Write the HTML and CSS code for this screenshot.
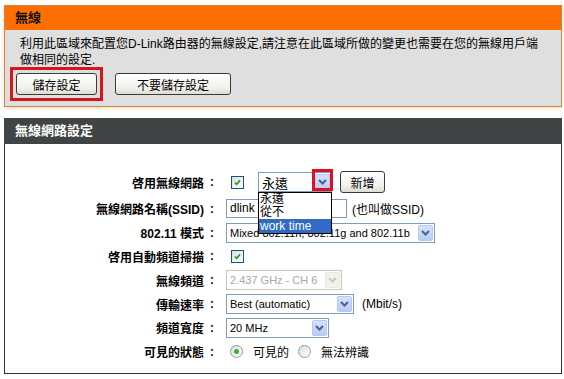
FILE: index.html
```html
<!DOCTYPE html>
<html lang="zh-Hant">
<head>
    <meta charset="UTF-8">
    <title>無線</title>
    <link rel="stylesheet" href="styles.css">
</head>
<body>
    <div class="box box-info">
        <h2 class="box-title">無線</h2>
        <div class="box-body">
            <p class="intro">利用此區域來配置您D-Link路由器的無線設定,請注意在此區域所做的變更也需要在您的無線用戶端<br>做相同的設定.</p>
            <div class="actions">
                <span class="mark"><button class="btn btn-save">儲存設定</button></span>
                <button class="btn btn-cancel">不要儲存設定</button>
            </div>
        </div>
    </div>

    <div class="box box-form">
        <h2 class="box-title">無線網路設定</h2>
        <div class="form">
            <div class="label">啓用無線網路<span class="colon">:</span></div>
            <div class="field">
                <span class="check"><svg viewBox="0 0 13 13"><path d="M3.5 6.5l2 2l4-4.5" /></svg></span>
                <div class="select sel-sched">
                    <span class="val">永遠</span>
                    <span class="arrow"><svg viewBox="0 0 9 6"><path d="M1 1l3.5 3.5l3.5-3.5" /></svg></span>
                    <span class="arrow-mark"></span>
                    <ul class="dropdown">
                        <li>永遠</li>
                        <li>從不</li>
                        <li class="active">work time</li>
                    </ul>
                </div>
                <button class="btn btn-add">新增</button>
            </div>

            <div class="label">無線網路名稱(SSID)<span class="colon">:</span></div>
            <div class="field">
                <span class="input">dlink</span>
                <span class="note">(也叫做SSID)</span>
            </div>

            <div class="label">802.11 模式<span class="colon">:</span></div>
            <div class="field">
                <div class="select sel-mode">
                    <span class="val">Mixed 802.11n, 802.11g and 802.11b</span>
                    <span class="arrow"><svg viewBox="0 0 9 6"><path d="M1 1l3.5 3.5l3.5-3.5" /></svg></span>
                </div>
            </div>

            <div class="label">啓用自動頻道掃描<span class="colon">:</span></div>
            <div class="field">
                <span class="check"><svg viewBox="0 0 13 13"><path d="M3.5 6.5l2 2l4-4.5" /></svg></span>
            </div>

            <div class="label">無線頻道<span class="colon">:</span></div>
            <div class="field">
                <div class="select sel-chan disabled">
                    <span class="val">2.437 GHz - CH 6</span>
                    <span class="arrow"><svg viewBox="0 0 9 6"><path d="M1 1l3.5 3.5l3.5-3.5" /></svg></span>
                </div>
            </div>

            <div class="label">傳輸速率<span class="colon">:</span></div>
            <div class="field">
                <div class="select sel-rate">
                    <span class="val">Best (automatic)</span>
                    <span class="arrow"><svg viewBox="0 0 9 6"><path d="M1 1l3.5 3.5l3.5-3.5" /></svg></span>
                </div>
                <span class="note">(Mbit/s)</span>
            </div>

            <div class="label">頻道寬度<span class="colon">:</span></div>
            <div class="field">
                <div class="select sel-width">
                    <span class="val">20 MHz</span>
                    <span class="arrow"><svg viewBox="0 0 9 6"><path d="M1 1l3.5 3.5l3.5-3.5" /></svg></span>
                </div>
            </div>

            <div class="label">可見的狀態<span class="colon">:</span></div>
            <div class="field">
                <span class="radio on"></span><span class="radio-text">可見的</span>
                <span class="radio"></span><span class="radio-text">無法辨識</span>
            </div>
        </div>
    </div>
</body>
</html>
```

FILE: styles.css
```css
body {
    margin: 0;
    padding: 5px 2px 0 4px;
    background: white;
    font-family: "Liberation Sans", "Noto Sans CJK TC", sans-serif;
    font-size: 12px;
    color: #000;
}
.box {
    width: 558px;
    box-sizing: border-box;
}
.box-title {
    margin: 0;
    font-size: 13px;
    font-weight: bold;
    height: 25px;
    line-height: 25px;
    padding-left: 10px;
}
.box-info {
    border: 1px solid #c8894a;
    box-shadow: 0 1px 4px rgba(240, 170, 80, 0.45);
}
.box-info .box-title {
    background: #ff6f00;
    color: #111;
    height: 24px;
    line-height: 24px;
}
.box-body {
    background: #dfdfdf;
    padding: 6px 5px 5px 5px;
}
.intro {
    margin: 0 0 0 10px;
    line-height: 16px;
    font-size: 12px;
}
.actions {
    display: flex;
    align-items: center;
    margin-top: -1px;
}
.mark {
    display: inline-block;
    border: 3px solid #d8141c;
    padding: 3px;
    margin-right: 12px;
}
.btn {
    font-family: "Liberation Sans", "Noto Sans CJK TC", sans-serif;
    font-size: 12px;
    height: 22px;
    padding: 0;
    border: 1px solid #3b3b3b;
    border-radius: 3px;
    background: linear-gradient(#ffffff, #f1f1ec 70%, #dcdcd2);
    color: #000;
}
.btn-save {
    display: block;
    width: 81px;
}
.btn-cancel {
    width: 116px;
}
.box-form {
    margin-top: 11px;
    border: 1px solid #333;
    border-top: 0;
}
.box-form .box-title {
    background: #404444;
    color: white;
    height: 26px;
    line-height: 26px;
    margin: 0 -1px;
    padding-left: 11px;
}
.form {
    display: grid;
    grid-template-columns: 209px 1fr;
    grid-template-rows: 30px repeat(7, 23.8px);
    column-gap: 12px;
    padding: 23px 0 9px;
}
.label {
    font-weight: bold;
    font-size: 12px;
    display: flex;
    align-items: center;
    justify-content: flex-end;
    white-space: nowrap;
}
.colon {
    margin-left: 6px;
}
.field {
    display: flex;
    align-items: center;
}
.check {
    width: 11px;
    height: 11px;
    border: 1px solid #1c5180;
    background: linear-gradient(135deg, #dcdcd7, #fff);
    margin-left: 5px;
    display: inline-block;
}
.check svg {
    display: block;
    width: 11px;
    height: 11px;
}
.check path {
    fill: none;
    stroke: #21a121;
    stroke-width: 2;
}
.select {
    position: relative;
    border: 1px solid #7f9db9;
    background: white;
    display: flex;
    align-items: center;
    box-sizing: border-box;
    height: 20px;
    font-size: 11px;
}
.select .val {
    flex: 1;
    padding-left: 3px;
    white-space: nowrap;
    overflow: hidden;
}
.arrow {
    width: 15px;
    height: 16px;
    margin-right: 1px;
    border: 1px solid #b6c9f3;
    border-radius: 2px;
    background: linear-gradient(#d6e2fd, #b7cbf7);
    box-sizing: border-box;
    display: flex;
    align-items: center;
    justify-content: center;
}
.arrow svg {
    width: 9px;
    height: 6px;
}
.arrow path {
    fill: none;
    stroke: #4d6185;
    stroke-width: 2;
}
.sel-sched {
    width: 74px;
    margin-left: 14px;
    font-size: 13px;
}
.arrow-mark {
    position: absolute;
    right: -2px;
    top: -4px;
    width: 21px;
    height: 22px;
    border: 3px solid #e01020;
    box-sizing: border-box;
}
.dropdown {
    position: absolute;
    top: 19px;
    left: -1px;
    width: 72px;
    margin: 0;
    padding: 0;
    list-style: none;
    background: white;
    border: 1px solid #000;
    font-size: 12px;
    z-index: 2;
}
.dropdown li {
    height: 13px;
    line-height: 13px;
    padding-left: 1px;
}
.dropdown li.active {
    background: #316ac5;
    color: white;
    height: 14px;
    line-height: 14px;
}
.btn-add {
    width: 45px;
    margin-left: 8px;
}
.input {
    width: 121px;
    height: 19px;
    box-sizing: border-box;
    border: 1px solid #7f9db9;
    padding-left: 3px;
    line-height: 17px;
    font-size: 12px;
}
.note {
    margin-left: 5px;
    font-size: 12px;
}
.sel-mode {
    width: 209px;
}
.sel-chan {
    width: 116px;
}
.select.disabled {
    border-color: #c9c7ba;
    color: #a8a8a8;
}
.select.disabled .arrow {
    background: #f3f3ee;
    border-color: #e8e8e0;
}
.select.disabled .arrow path {
    stroke: #c9c9c0;
}
.sel-rate {
    width: 128px;
}
.sel-rate + .note {
    margin-left: 8px;
}
.sel-width {
    width: 103px;
}
.radio {
    width: 11px;
    height: 11px;
    border: 1px solid #8a9bb0;
    border-radius: 50%;
    background: linear-gradient(135deg, #dcdcd7, #fff);
    margin-left: 4px;
    position: relative;
}
.radio.on::after {
    content: "";
    position: absolute;
    left: 3px;
    top: 3px;
    width: 5px;
    height: 5px;
    border-radius: 50%;
    background: #3fae3f;
}
.radio-text {
    margin-left: 10px;
    margin-right: 5px;
    font-size: 12px;
}
```
